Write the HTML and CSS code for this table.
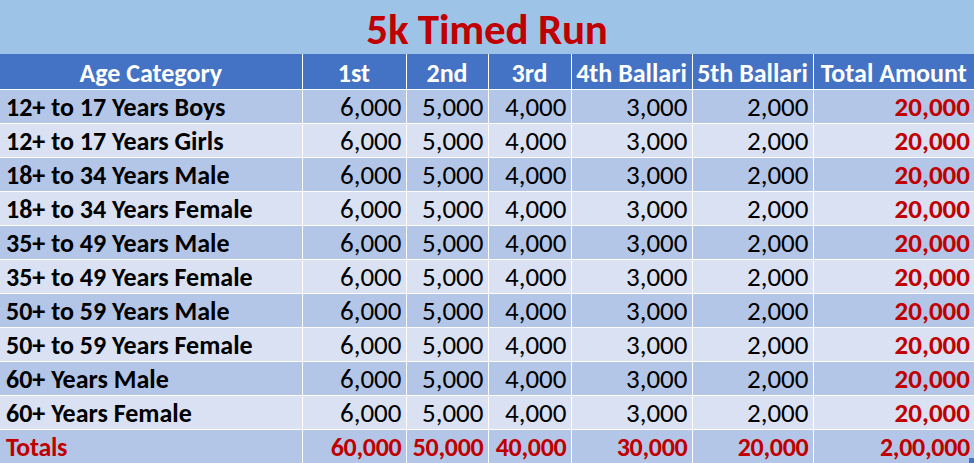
FILE: index.html
```html
<!DOCTYPE html>
<html>
<head>
<meta charset="utf-8">
<link rel="stylesheet" href="styles.css">
</head>
<body>
<div class="sheet">
  <div class="title">5k Timed Run</div>
  <table class="prizes">
    <colgroup>
      <col class="c-cat"><col class="c-1"><col class="c-2"><col class="c-3"><col class="c-4"><col class="c-5"><col class="c-t">
    </colgroup>
    <thead>
      <tr><th>Age Category</th><th>1st</th><th>2nd</th><th>3rd</th><th>4th Ballari</th><th>5th Ballari</th><th>Total Amount</th></tr>
    </thead>
    <tbody>
      <tr class="odd"><td class="cat">12+ to 17 Years Boys</td><td>6,000</td><td>5,000</td><td>4,000</td><td>3,000</td><td>2,000</td><td class="tot">20,000</td></tr>
      <tr class="even"><td class="cat">12+ to 17 Years Girls</td><td>6,000</td><td>5,000</td><td>4,000</td><td>3,000</td><td>2,000</td><td class="tot">20,000</td></tr>
      <tr class="odd"><td class="cat">18+ to 34 Years Male</td><td>6,000</td><td>5,000</td><td>4,000</td><td>3,000</td><td>2,000</td><td class="tot">20,000</td></tr>
      <tr class="even"><td class="cat">18+ to 34 Years Female</td><td>6,000</td><td>5,000</td><td>4,000</td><td>3,000</td><td>2,000</td><td class="tot">20,000</td></tr>
      <tr class="odd"><td class="cat">35+ to 49 Years Male</td><td>6,000</td><td>5,000</td><td>4,000</td><td>3,000</td><td>2,000</td><td class="tot">20,000</td></tr>
      <tr class="even"><td class="cat">35+ to 49 Years Female</td><td>6,000</td><td>5,000</td><td>4,000</td><td>3,000</td><td>2,000</td><td class="tot">20,000</td></tr>
      <tr class="odd"><td class="cat">50+ to 59 Years Male</td><td>6,000</td><td>5,000</td><td>4,000</td><td>3,000</td><td>2,000</td><td class="tot">20,000</td></tr>
      <tr class="even"><td class="cat">50+ to 59 Years Female</td><td>6,000</td><td>5,000</td><td>4,000</td><td>3,000</td><td>2,000</td><td class="tot">20,000</td></tr>
      <tr class="odd"><td class="cat">60+ Years Male</td><td>6,000</td><td>5,000</td><td>4,000</td><td>3,000</td><td>2,000</td><td class="tot">20,000</td></tr>
      <tr class="even"><td class="cat">60+ Years Female</td><td>6,000</td><td>5,000</td><td>4,000</td><td>3,000</td><td>2,000</td><td class="tot">20,000</td></tr>
      <tr class="odd totals"><td class="cat">Totals</td><td>60,000</td><td>50,000</td><td>40,000</td><td>30,000</td><td>20,000</td><td class="grand">2,00,000<span class="handle"></span></td></tr>
    </tbody>
  </table>
</div>
</body>
</html>
```
FILE: styles.css
```css
html, body {
  margin: 0;
  padding: 0;
  background: #ffffff;
}
.sheet {
  width: 974px;
  height: 463px;
  overflow: hidden;
  font-family: Carlito, Lato, "Liberation Sans", sans-serif;
}
.title {
  height: 54px;
  box-sizing: border-box;
  background: #9dc3e6;
  color: #c00000;
  font-weight: 700;
  font-size: 43px;
  line-height: 60px;
  text-align: center;
  letter-spacing: -0.2px;
}
.prizes {
  width: 974px;
  border-collapse: collapse;
  table-layout: fixed;
  font-size: 26px;
  line-height: 30px;
}
.c-cat { width: 302px; }
.c-1 { width: 104px; }
.c-2 { width: 82px; }
.c-3 { width: 83px; }
.c-4 { width: 121px; }
.c-5 { width: 121px; }
.c-t { width: 161px; }
.prizes th, .prizes td {
  border: 1px solid #ffffff;
  padding: 0 4px 0 0;
  white-space: nowrap;
  overflow: hidden;
}
.prizes th:first-child, .prizes td:first-child { border-left: none; }
.prizes th:last-child, .prizes td:last-child { border-right: none; }
.prizes thead tr { height: 35px; }
.prizes thead th {
  border-top: none;
  background: #4472c4;
  color: #ffffff;
  font-weight: 700;
  text-align: center;
  padding: 3px 0 0 0;
}
.prizes tbody tr { height: 34px; }
.prizes tbody td {
  text-align: right;
  color: #000000;
  font-weight: 400;
  font-size: 27px;
  padding-top: 2px;
}
.prizes tbody tr:last-child td { border-bottom: none; }
.prizes tr.odd td { background: #b4c6e7; }
.prizes tr.even td { background: #d9e1f2; }
.prizes td.cat {
  text-align: left;
  font-weight: 700;
  font-size: 26px;
  padding-left: 6px;
}
.prizes td.tot { color: #c00000; font-weight: 700; }
.prizes tr.totals td {
  color: #c00000;
  font-weight: 700;
  font-size: 26px;
  letter-spacing: -0.3px;
}
.prizes td.grand { position: relative; }
.handle {
  position: absolute;
  right: 0;
  bottom: 0;
  width: 5px;
  height: 5px;
  background: #4472c4;
}
```
